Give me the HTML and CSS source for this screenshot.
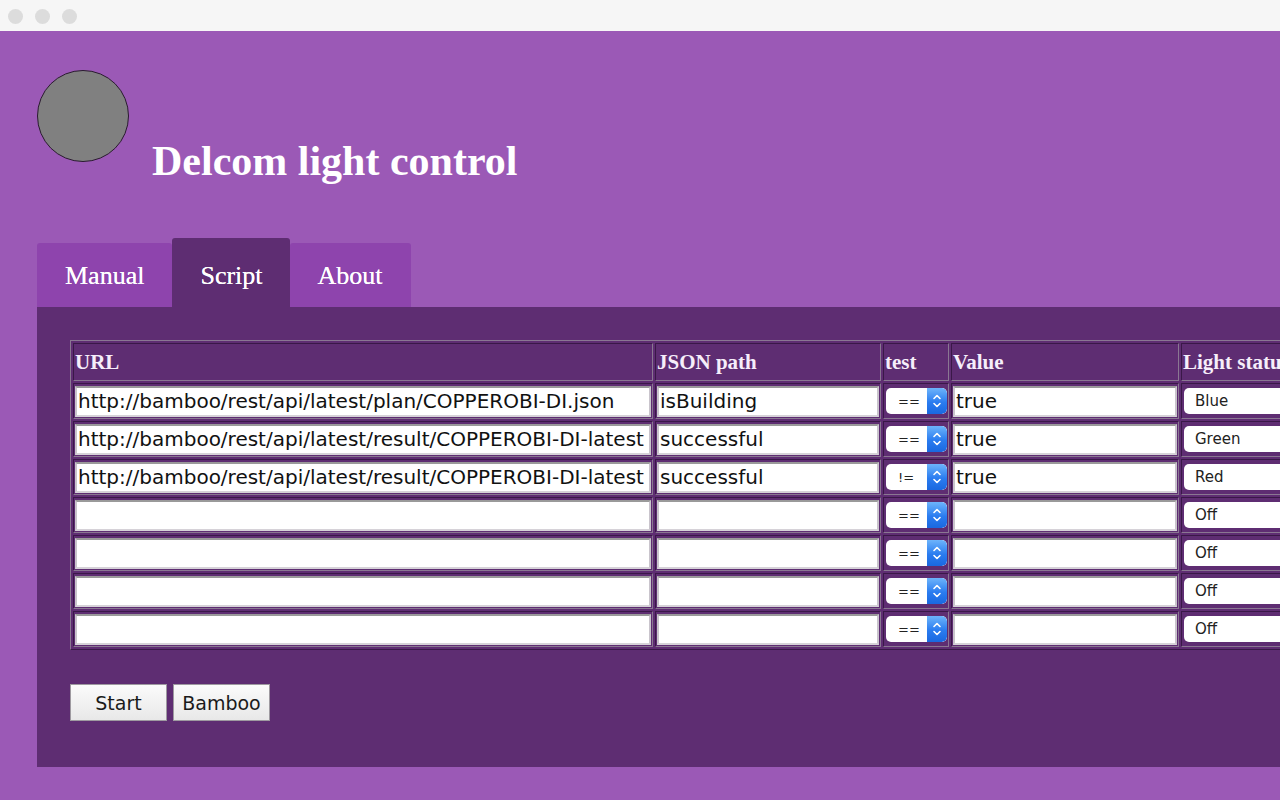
FILE: index.html
```html
<!DOCTYPE html>
<html lang="en">
<head>
<meta charset="utf-8">
<title>Delcom light control</title>
<link rel="stylesheet" href="styles.css">
</head>
<body>
<div class="titlebar">
  <span class="dot"></span><span class="dot"></span><span class="dot"></span>
</div>
<header class="header">
  <div class="lamp"></div>
  <h1 class="title">Delcom light control</h1>
</header>
<nav class="tabs">
  <div class="tab">Manual</div>
  <div class="tab active">Script</div>
  <div class="tab">About</div>
</nav>
<main class="panel">
  <table class="rules">
    <thead>
      <tr>
        <th class="c-url">URL</th>
        <th class="c-json">JSON path</th>
        <th class="c-test">test</th>
        <th class="c-val">Value</th>
        <th class="c-light">Light status</th>
      </tr>
    </thead>
    <tbody>
      <tr>
        <td><input class="field" value="http://bamboo/rest/api/latest/plan/COPPEROBI-DI.json"></td>
        <td><input class="field" value="isBuilding"></td>
        <td><div class="sel"><span class="sel-text">==</span><span class="stepper"><svg viewBox="0 0 20 26" width="20" height="26"><path d="M7 10.5 L10 7.5 L13 10.5 M7 15.5 L10 18.5 L13 15.5" fill="none" stroke="#fff" stroke-width="1.6" stroke-linecap="round" stroke-linejoin="round"/></svg></span></div></td>
        <td><input class="field" value="true"></td>
        <td><div class="lsel">Blue</div></td>
      </tr>
      <tr>
        <td><input class="field" value="http://bamboo/rest/api/latest/result/COPPEROBI-DI-latest"></td>
        <td><input class="field" value="successful"></td>
        <td><div class="sel"><span class="sel-text">==</span><span class="stepper"><svg viewBox="0 0 20 26" width="20" height="26"><path d="M7 10.5 L10 7.5 L13 10.5 M7 15.5 L10 18.5 L13 15.5" fill="none" stroke="#fff" stroke-width="1.6" stroke-linecap="round" stroke-linejoin="round"/></svg></span></div></td>
        <td><input class="field" value="true"></td>
        <td><div class="lsel">Green</div></td>
      </tr>
      <tr>
        <td><input class="field" value="http://bamboo/rest/api/latest/result/COPPEROBI-DI-latest"></td>
        <td><input class="field" value="successful"></td>
        <td><div class="sel"><span class="sel-text">!=</span><span class="stepper"><svg viewBox="0 0 20 26" width="20" height="26"><path d="M7 10.5 L10 7.5 L13 10.5 M7 15.5 L10 18.5 L13 15.5" fill="none" stroke="#fff" stroke-width="1.6" stroke-linecap="round" stroke-linejoin="round"/></svg></span></div></td>
        <td><input class="field" value="true"></td>
        <td><div class="lsel">Red</div></td>
      </tr>
      <tr>
        <td><input class="field" value=""></td>
        <td><input class="field" value=""></td>
        <td><div class="sel"><span class="sel-text">==</span><span class="stepper"><svg viewBox="0 0 20 26" width="20" height="26"><path d="M7 10.5 L10 7.5 L13 10.5 M7 15.5 L10 18.5 L13 15.5" fill="none" stroke="#fff" stroke-width="1.6" stroke-linecap="round" stroke-linejoin="round"/></svg></span></div></td>
        <td><input class="field" value=""></td>
        <td><div class="lsel">Off</div></td>
      </tr>
      <tr>
        <td><input class="field" value=""></td>
        <td><input class="field" value=""></td>
        <td><div class="sel"><span class="sel-text">==</span><span class="stepper"><svg viewBox="0 0 20 26" width="20" height="26"><path d="M7 10.5 L10 7.5 L13 10.5 M7 15.5 L10 18.5 L13 15.5" fill="none" stroke="#fff" stroke-width="1.6" stroke-linecap="round" stroke-linejoin="round"/></svg></span></div></td>
        <td><input class="field" value=""></td>
        <td><div class="lsel">Off</div></td>
      </tr>
      <tr>
        <td><input class="field" value=""></td>
        <td><input class="field" value=""></td>
        <td><div class="sel"><span class="sel-text">==</span><span class="stepper"><svg viewBox="0 0 20 26" width="20" height="26"><path d="M7 10.5 L10 7.5 L13 10.5 M7 15.5 L10 18.5 L13 15.5" fill="none" stroke="#fff" stroke-width="1.6" stroke-linecap="round" stroke-linejoin="round"/></svg></span></div></td>
        <td><input class="field" value=""></td>
        <td><div class="lsel">Off</div></td>
      </tr>
      <tr>
        <td><input class="field" value=""></td>
        <td><input class="field" value=""></td>
        <td><div class="sel"><span class="sel-text">==</span><span class="stepper"><svg viewBox="0 0 20 26" width="20" height="26"><path d="M7 10.5 L10 7.5 L13 10.5 M7 15.5 L10 18.5 L13 15.5" fill="none" stroke="#fff" stroke-width="1.6" stroke-linecap="round" stroke-linejoin="round"/></svg></span></div></td>
        <td><input class="field" value=""></td>
        <td><div class="lsel">Off</div></td>
      </tr>
    </tbody>
  </table>
  <div class="actions">
    <button class="btn">Start</button>
    <button class="btn">Bamboo</button>
  </div>
</main>
</body>
</html>
```
FILE: styles.css
```css
html {
  overflow: hidden;
}
body {
  margin: 0;
  background: #9b59b6;
  font-family: "Liberation Serif", "Times New Roman", serif;
  width: 1500px;
  min-height: 800px;
}
.titlebar {
  height: 31px;
  background: #f6f6f6;
  display: flex;
  align-items: center;
  gap: 12px;
  padding: 2px 0 0 8px;
  box-sizing: border-box;
  width: 1280px;
}
.dot {
  width: 15px;
  height: 15px;
  border-radius: 50%;
  background: #dcdcdc;
}
.header {
  display: flex;
  align-items: flex-start;
  padding: 39px 0 0 37px;
}
.lamp {
  width: 90px;
  height: 90px;
  border-radius: 50%;
  background: #808080;
  border: 1px solid #2a1a30;
  flex: none;
}
.title {
  margin: 70px 0 0 23px;
  font-size: 42px;
  line-height: 42px;
  font-weight: bold;
  color: #fff;
}
.tabs {
  display: flex;
  align-items: flex-end;
  margin-top: 56px;
  padding-left: 37px;
}
.tab {
  height: 64px;
  box-sizing: border-box;
  line-height: 62px;
  padding: 2px 28px 0;
  font-size: 26px;
  color: #fff;
  background: #8e44ad;
  border-radius: 3px 3px 0 0;
  text-shadow: 0 0 0.5px #fff;
}
.tab.active {
  background: #5e2d72;
  height: 69px;
  padding-top: 7px;
  padding-right: 27px;
}
.panel {
  display: block;
  margin-left: 37px;
  width: 1400px;
  background: #5e2d72;
  padding: 33px 0 46px 33px;
  box-sizing: border-box;
}
.rules {
  border-collapse: separate;
  border-spacing: 2px;
  border: 1px solid;
  border-color: #8a7792 #3a1848 #3a1848 #8a7792;
}
.rules th,
.rules td {
  padding: 1px;
  border: 1px solid;
  border-color: #3a1848 #8a7792 #8a7792 #3a1848;
}
.rules th {
  height: 34px;
  text-align: left;
  vertical-align: middle;
  color: #f6eefa;
  font-size: 21px;
  font-weight: bold;
  line-height: 22px;
}
.rules td {
  height: 32px;
  vertical-align: middle;
}
.c-url { width: 576px; }
.c-json { width: 222px; }
.c-test { width: 62px; }
.c-val { width: 224px; }
.c-light { width: 180px; }
.field {
  display: block;
  width: 100%;
  height: 31px;
  box-sizing: border-box;
  margin: 0;
  padding: 0 1px;
  border: 2px solid;
  border-color: #9a9a9a #c9c4cc #d6d2d8 #c9c4cc;
  background: #fff;
  font-family: "DejaVu Sans", "Liberation Sans", sans-serif;
  font-size: 20px;
  color: #111;
  outline: none;
}
.sel {
  display: flex;
  align-items: stretch;
  height: 26px;
  width: 61px;
  margin-left: 1px;
  background: #fff;
  border-radius: 5px;
  overflow: hidden;
  font-family: "DejaVu Sans", "Liberation Sans", sans-serif;
}
.sel-text {
  flex: 1;
  display: flex;
  align-items: center;
  padding-left: 12px;
  font-size: 13px;
  color: #222;
}
.stepper {
  width: 20px;
  flex: none;
  background: linear-gradient(#6db4fb, #2a7cf0 55%, #1a68e0);
  border-radius: 0 5px 5px 0;
  display: flex;
}
.lsel {
  height: 26px;
  line-height: 26px;
  margin-left: 1px;
  padding-left: 11px;
  background: #fff;
  border-radius: 5px 0 0 5px;
  font-family: "DejaVu Sans", "Liberation Sans", sans-serif;
  font-size: 15px;
  color: #222;
}
.actions {
  display: flex;
  gap: 6px;
  margin-top: 34px;
}
.btn {
  width: 97px;
  height: 37px;
  margin: 0;
  padding: 0;
  border: 1px solid #9e9aa0;
  background: linear-gradient(#fbfbfb, #e8e8e8);
  font-family: "DejaVu Sans", "Liberation Sans", sans-serif;
  font-size: 19px;
  color: #1a1a1a;
}
```
